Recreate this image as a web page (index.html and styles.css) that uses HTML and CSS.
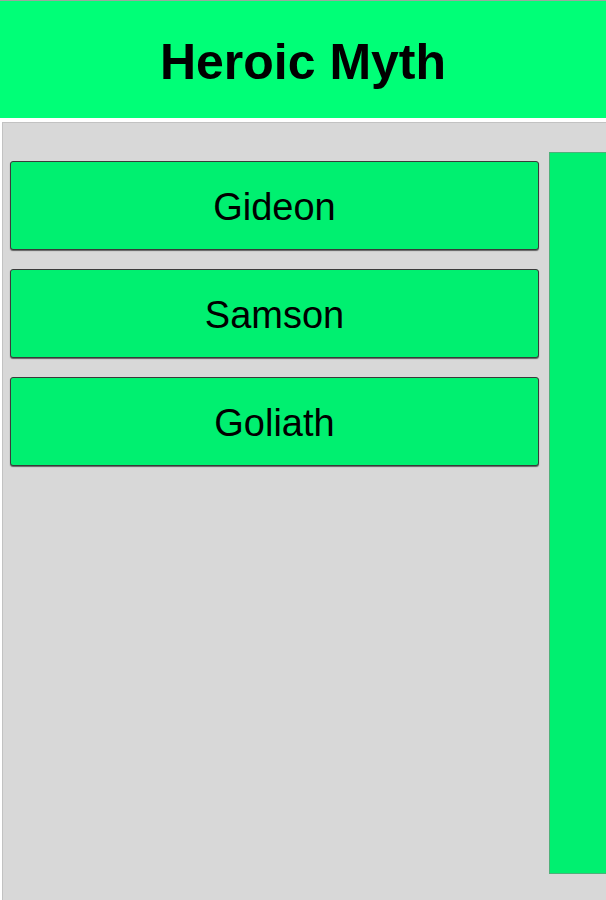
FILE: index.html
```html
<!DOCTYPE html>
<html>
<head>
<meta charset="utf-8">
<link rel="stylesheet" href="styles.css">
</head>
<body>
<header class="header"><h1 class="title">Heroic Myth</h1></header>
<main class="panel">
  <div class="list">
    <div class="item">Gideon</div>
    <div class="item">Samson</div>
    <div class="item">Goliath</div>
  </div>
  <div class="side"></div>
</main>
</body>
</html>
```
FILE: styles.css
```css
html, body { margin: 0; padding: 0; background: #ffffff; }
body { width: 606px; height: 900px; overflow: hidden; font-family: "Liberation Sans", Arial, sans-serif; }
.header {
  height: 117px;
  background: #00ff77;
  border-top: 1px solid #9aa89f;
  display: flex;
  align-items: center;
  justify-content: center;
}
.title { margin: 0; font-size: 50px; font-weight: bold; color: #000; line-height: 1; padding-top: 4px; }
.panel {
  margin-top: 4px;
  margin-left: 2px;
  height: 778px;
  background: #d8d8d8;
  border-left: 1px solid #c2c2c2;
  border-top: 1px solid #c2c2c2;
  display: flex;
  align-items: flex-start;
  gap: 10px;
}
.list {
  width: 529px;
  margin-left: 7px;
  margin-top: 38px;
  display: flex;
  flex-direction: column;
  gap: 19px;
}
.item {
  height: 87px;
  padding-top: 4px;
  box-sizing: content-box;
  height: 83px;
  background: #00f070;
  border: 1px solid #3a3a3a;
  border-radius: 3px;
  box-shadow: 0 1px 1px rgba(0,0,0,0.55);
  display: flex;
  align-items: center;
  justify-content: center;
  font-size: 38px;
  color: #000;
}
.side {
  flex: 1;
  margin-top: 29px;
  height: 720px;
  background: #00f070;
  border: 1px solid #4fb07a;
  border-right: none;
}
```
